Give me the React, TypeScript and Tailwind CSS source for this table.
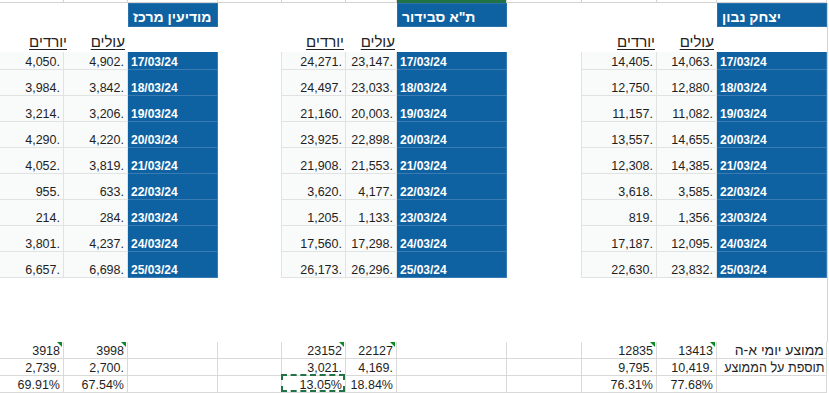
import React from "react"

const GRID =
  "grid grid-cols-[64px_64px_90px_64px_64px_51px_110px_75px_75px_60px_110px_2px]"

const FONT = { fontFamily: '"Liberation Sans", Arial, "DejaVu Sans", sans-serif' }

type Day = {
  date: string
  modiin: [string, string]
  telaviv: [string, string]
  navon: [string, string]
}

// [עולים, יורדים]
const days: Day[] = [
  { date: "17/03/24", modiin: ["4,902.", "4,050."], telaviv: ["23,147.", "24,271."], navon: ["14,063.", "14,405."] },
  { date: "18/03/24", modiin: ["3,842.", "3,984."], telaviv: ["23,033.", "24,497."], navon: ["12,880.", "12,750."] },
  { date: "19/03/24", modiin: ["3,206.", "3,214."], telaviv: ["20,003.", "21,160."], navon: ["11,082.", "11,157."] },
  { date: "20/03/24", modiin: ["4,220.", "4,290."], telaviv: ["22,898.", "23,925."], navon: ["14,655.", "13,557."] },
  { date: "21/03/24", modiin: ["3,819.", "4,052."], telaviv: ["21,553.", "21,908."], navon: ["14,385.", "12,308."] },
  { date: "22/03/24", modiin: ["633.", "955."], telaviv: ["4,177.", "3,620."], navon: ["3,585.", "3,618."] },
  { date: "23/03/24", modiin: ["284.", "214."], telaviv: ["1,133.", "1,205."], navon: ["1,356.", "819."] },
  { date: "24/03/24", modiin: ["4,237.", "3,801."], telaviv: ["17,298.", "17,560."], navon: ["12,095.", "17,187."] },
  { date: "25/03/24", modiin: ["6,698.", "6,657."], telaviv: ["26,296.", "26,173."], navon: ["23,832.", "22,630."] },
]

function Num({ v }: { v: string }) {
  return (
    <div className="flex items-end justify-end pr-[3px] bg-[#f9fafa] border-r border-b border-[#e1e3e3] text-[12.5px] leading-[14px] text-[#1f1f1f]">
      {v}
    </div>
  )
}

function DateCell({ v }: { v: string }) {
  return (
    <div className="flex items-end pl-[3px] bg-[#0f62a1] border-r border-b border-[#3b7bb3] text-[12px] leading-[14px] font-bold text-white">
      {v}
    </div>
  )
}

function Gap({ line }: { line?: boolean }) {
  return <div className={line ? "border-r border-[#e1e3e3]" : ""} />
}

function Edge() {
  return <div className="border-l border-[#d4d4d4]" />
}

function Header({ title }: { title: string }) {
  return (
    <div className="flex items-end pl-[4px] bg-[#0f62a1] border border-[#2b72ad] text-[14px] leading-[18px] font-bold text-white">
      <span dir="rtl">{title}</span>
    </div>
  )
}

function Label({ text, pr = "pr-[3px]" }: { text: string; pr?: string }) {
  return (
    <div className={`flex items-end justify-end pb-[1px] ${pr} text-[15px] leading-[18px] text-[#222]`}>
      <span dir="rtl" className="underline underline-offset-[2px]">
        {text}
      </span>
    </div>
  )
}

function Foot({ v, tri, children }: { v?: string; tri?: boolean; children?: React.ReactNode }) {
  return (
    <div className="relative flex items-end justify-end pr-[3px] border-r border-b border-[#d9d9d9] text-[12.5px] leading-[14px] text-[#1f1f1f]">
      {v}
      {tri && (
        <span className="absolute top-0 right-[1px] w-0 h-0 border-t-[5px] border-l-[5px] border-t-[#0b8a24] border-l-transparent" />
      )}
      {children}
    </div>
  )
}

function FootLabel({ text, narrow }: { text: string; narrow?: boolean }) {
  return (
    <div className="flex items-end justify-end pr-[2px] border-r border-b border-[#d9d9d9] text-[14px] leading-[15px] text-[#1f1f1f] whitespace-nowrap">
      <span dir="rtl" className={narrow ? "inline-block origin-right scale-x-[0.9]" : ""}>
        {text}
      </span>
    </div>
  )
}

export default function App() {
  return (
    <div className="w-[829px] h-[393px] overflow-hidden bg-white" style={FONT}>
      {/* top strip of the previous row */}
      <div className={`${GRID} h-[3px]`}>
        {Array.from({ length: 11 }).map((_, i) =>
          i === 6 ? (
            <div key={i} className="bg-[#217346] border-r border-[#d4d4d4]" />
          ) : (
            <div key={i} className="border-r border-b border-[#d4d4d4]" />
          )
        )}
        <div />
      </div>

      {/* branch titles */}
      <div className={`${GRID} h-[24px]`}>
        <div />
        <div />
        <Header title="מודיעין מרכז" />
        <div />
        <div />
        <div />
        <Header title='ת"א סבידור' />
        <div />
        <div />
        <div />
        <Header title="יצחק נבון" />
        <Edge />
      </div>

      {/* column labels */}
      <div className={`${GRID} h-[25px]`}>
        <Label text="יורדים" pr="pr-0 -mr-[3px]" />
        <Label text="עולים" />
        <div />
        <div />
        <Label text="יורדים" pr="pr-[2px]" />
        <Label text="עולים" pr="pr-[2px]" />
        <div />
        <div />
        <Label text="יורדים" pr="pr-[2px]" />
        <Label text="עולים" pr="pr-[3px]" />
        <div />
        <Edge />
      </div>

      {/* daily rows */}
      {days.map((d, i) => (
        <div key={d.date} className={`${GRID} ${i === 0 ? "h-[18px]" : "h-[26px]"}`}>
          <Num v={d.modiin[1]} />
          <Num v={d.modiin[0]} />
          <DateCell v={d.date} />
          <Gap line />
          <Num v={d.telaviv[1]} />
          <Num v={d.telaviv[0]} />
          <DateCell v={d.date} />
          <Gap line />
          <Num v={d.navon[1]} />
          <Num v={d.navon[0]} />
          <DateCell v={d.date} />
          <Edge />
        </div>
      ))}

      {/* empty rows */}
      <div className={`${GRID} h-[64px]`}>
        {Array.from({ length: 11 }).map((_, i) => (
          <div key={i} />
        ))}
        <Edge />
      </div>

      {/* summary */}
      <div className={`${GRID} h-[17px]`}>
        <Foot v="3918" tri />
        <Foot v="3998" tri />
        <Foot />
        <Foot />
        <Foot v="23152" tri />
        <Foot v="22127" tri />
        <Foot />
        <Foot />
        <Foot v="12835" tri />
        <Foot v="13413" tri />
        <FootLabel text="ממוצע יומי א-ה" />
        <div />
      </div>
      <div className={`${GRID} h-[17px]`}>
        <Foot v="2,739." />
        <Foot v="2,700." />
        <Foot />
        <Foot />
        <Foot v="3,021." />
        <Foot v="4,169." />
        <Foot />
        <Foot />
        <Foot v="9,795." />
        <Foot v="10,419." />
        <FootLabel text="תוספת על הממוצע" narrow />
        <div />
      </div>
      <div className={`${GRID} h-[17px]`}>
        <Foot v="69.91%" />
        <Foot v="67.54%" />
        <Foot />
        <Foot />
        <Foot v="13.05%">
          <span className="absolute -top-[2px] -left-[1px] right-0 bottom-0 border-2 border-dashed border-[#217346]" />
        </Foot>
        <Foot v="18.84%" />
        <Foot />
        <Foot />
        <Foot v="76.31%" />
        <Foot v="77.68%" />
        <Foot />
        <div />
      </div>
    </div>
  )
}
